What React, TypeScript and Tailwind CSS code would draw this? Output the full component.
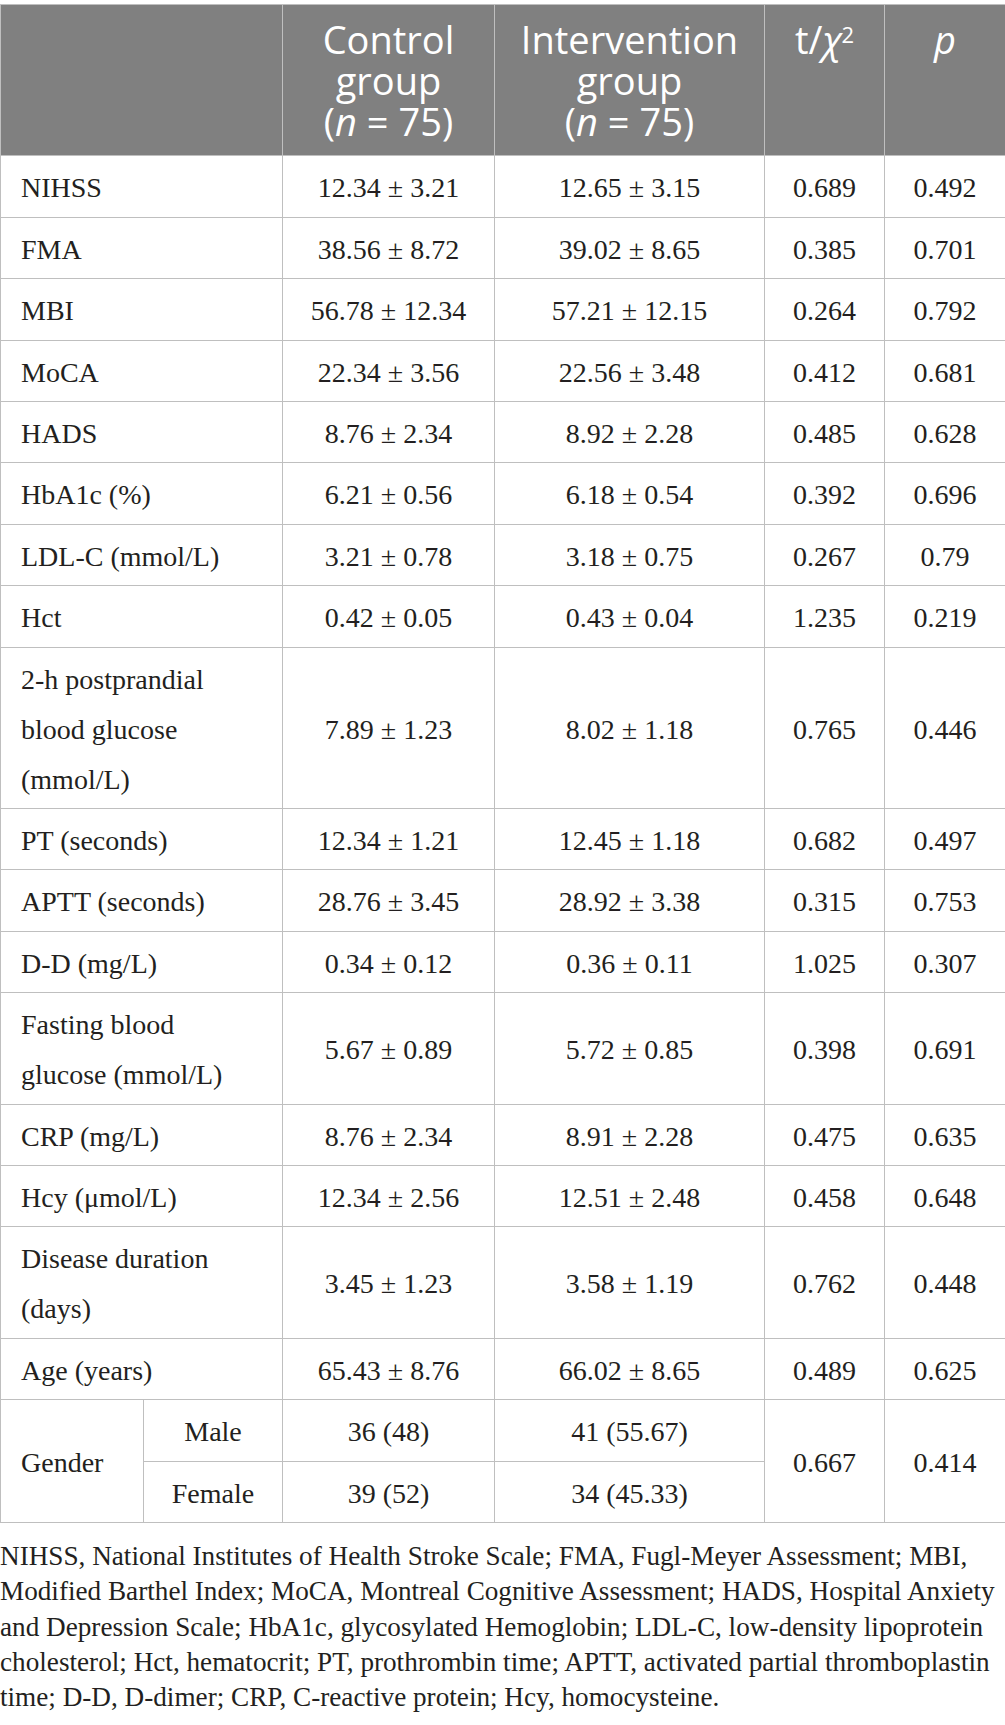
const rows: [string, string, string, string, string][] = [
  ['NIHSS', '12.34 ± 3.21', '12.65 ± 3.15', '0.689', '0.492'],
  ['FMA', '38.56 ± 8.72', '39.02 ± 8.65', '0.385', '0.701'],
  ['MBI', '56.78 ± 12.34', '57.21 ± 12.15', '0.264', '0.792'],
  ['MoCA', '22.34 ± 3.56', '22.56 ± 3.48', '0.412', '0.681'],
  ['HADS', '8.76 ± 2.34', '8.92 ± 2.28', '0.485', '0.628'],
  ['HbA1c (%)', '6.21 ± 0.56', '6.18 ± 0.54', '0.392', '0.696'],
  ['LDL-C (mmol/L)', '3.21 ± 0.78', '3.18 ± 0.75', '0.267', '0.79'],
  ['Hct', '0.42 ± 0.05', '0.43 ± 0.04', '1.235', '0.219'],
  ['2-h postprandial blood glucose (mmol/L)', '7.89 ± 1.23', '8.02 ± 1.18', '0.765', '0.446'],
  ['PT (seconds)', '12.34 ± 1.21', '12.45 ± 1.18', '0.682', '0.497'],
  ['APTT (seconds)', '28.76 ± 3.45', '28.92 ± 3.38', '0.315', '0.753'],
  ['D-D (mg/L)', '0.34 ± 0.12', '0.36 ± 0.11', '1.025', '0.307'],
  ['Fasting blood glucose (mmol/L)', '5.67 ± 0.89', '5.72 ± 0.85', '0.398', '0.691'],
  ['CRP (mg/L)', '8.76 ± 2.34', '8.91 ± 2.28', '0.475', '0.635'],
  ['Hcy (μmol/L)', '12.34 ± 2.56', '12.51 ± 2.48', '0.458', '0.648'],
  ['Disease duration (days)', '3.45 ± 1.23', '3.58 ± 1.19', '0.762', '0.448'],
  ['Age (years)', '65.43 ± 8.76', '66.02 ± 8.65', '0.489', '0.625'],
]

const cell = 'border border-[#bfbfbf] pt-[7px] pb-[3.4px] leading-[50px] align-middle'
const head = 'border border-[#bfbfbf] pt-[14.3px] pb-[13.2px] px-2 align-top text-center font-normal'

export default function App() {
  return (
    <div className="w-[1005px] bg-white pt-[4px] text-[#231f20] [font-family:'Liberation_Serif',serif]">
      <table className="w-[1005px] table-fixed border-collapse text-[28px] [font-family:'Liberation_Serif',serif]">
        <colgroup>
          <col className="w-[143px]" />
          <col className="w-[139px]" />
          <col className="w-[212px]" />
          <col className="w-[270px]" />
          <col className="w-[120px]" />
          <col className="w-[121px]" />
        </colgroup>
        <thead>
          <tr className="bg-[#808080] text-white [font-family:'Open_Sans',sans-serif] text-[38px] leading-[41px]">
            <th colSpan={2} className={head} />
            <th className={head}>
              Control
              <br />
              group
              <br />(<i>n</i> = 75)
            </th>
            <th className={head}>
              Intervention
              <br />
              group
              <br />(<i>n</i> = 75)
            </th>
            <th className={head}>
              t/<i>χ</i>
              <sup className="text-[22px]">2</sup>
            </th>
            <th className={head}>
              <i>p</i>
            </th>
          </tr>
        </thead>
        <tbody>
          {rows.map(([label, ctrl, intv, t, p]) => (
            <tr key={label}>
              <td colSpan={2} className={`${cell} pl-[20px] pr-[40px] text-left`}>
                {label}
              </td>
              <td className={`${cell} text-center`}>{ctrl}</td>
              <td className={`${cell} text-center`}>{intv}</td>
              <td className={`${cell} text-center`}>{t}</td>
              <td className={`${cell} text-center`}>{p}</td>
            </tr>
          ))}
          <tr>
            <td rowSpan={2} className={`${cell} pl-[20px] text-left`}>
              Gender
            </td>
            <td className={`${cell} text-center`}>Male</td>
            <td className={`${cell} text-center`}>36 (48)</td>
            <td className={`${cell} text-center`}>41 (55.67)</td>
            <td rowSpan={2} className={`${cell} text-center`}>
              0.667
            </td>
            <td rowSpan={2} className={`${cell} text-center`}>
              0.414
            </td>
          </tr>
          <tr>
            <td className={`${cell} text-center`}>Female</td>
            <td className={`${cell} text-center`}>39 (52)</td>
            <td className={`${cell} text-center`}>34 (45.33)</td>
          </tr>
        </tbody>
      </table>
      <p className="mt-[16px] text-[27.2px] leading-[35.3px] [font-family:'Liberation_Serif',serif] text-[#231f20]">
        NIHSS, National Institutes of Health Stroke Scale; FMA, Fugl-Meyer Assessment; MBI,
        <br />
        Modified Barthel Index; MoCA, Montreal Cognitive Assessment; HADS, Hospital Anxiety
        <br />
        and Depression Scale; HbA1c, glycosylated Hemoglobin; LDL-C, low-density lipoprotein
        <br />
        cholesterol; Hct, hematocrit; PT, prothrombin time; APTT, activated partial thromboplastin
        <br />
        time; D-D, D-dimer; CRP, C-reactive protein; Hcy, homocysteine.
      </p>
    </div>
  )
}
